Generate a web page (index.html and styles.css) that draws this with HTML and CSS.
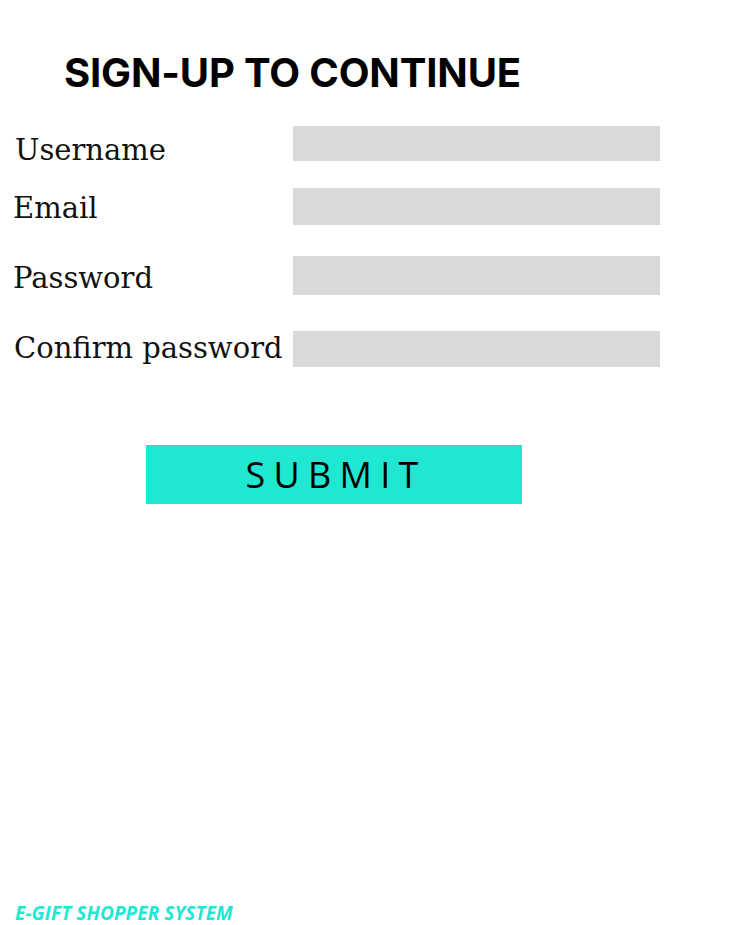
FILE: index.html
```html
<!DOCTYPE html>
<html>
<head>
<meta charset="utf-8">
<link rel="stylesheet" href="styles.css">
</head>
<body>
<div class="page">
  <h1 class="title">SIGN-UP TO CONTINUE</h1>
  <form class="form">
    <div class="row row-1"><label class="label">Username</label><div class="field"></div></div>
    <div class="row row-2"><label class="label">Email</label><div class="field"></div></div>
    <div class="row row-3"><label class="label">Password</label><div class="field"></div></div>
    <div class="row row-4"><label class="label">Confirm password</label><div class="field"></div></div>
    <div class="actions"><button type="button" class="submit">SUBMIT</button></div>
  </form>
  <footer class="footer">E-GIFT SHOPPER SYSTEM</footer>
</div>
</body>
</html>
```
FILE: styles.css
```css
* { box-sizing: border-box; }
html, body { margin: 0; padding: 0; background: #fff; }
.page {
  min-height: 925px;
  display: flex;
  flex-direction: column;
}
.title {
  margin: 49px 0 0 64px;
  font-family: Inter, "Liberation Sans", sans-serif;
  font-weight: 700;
  font-size: 40px;
  line-height: 48px;
  letter-spacing: -0.004em;
  color: #000;
}
.form { display: flex; flex-direction: column; margin: 0; }
.row { display: flex; align-items: flex-start; }
.label {
  width: 293px;
  padding-left: 14px;
  font-family: "DejaVu Serif", "Liberation Serif", serif;
  font-size: 29px;
  line-height: 32px;
  color: #111;
  white-space: nowrap;
}
.field { width: 367px; background: #d9d9d9; }
.row-1 { margin-top: 29px; }
.row-1 .label { margin-top: 8px; padding-left: 15px; }
.row-1 .field { height: 35px; }
.row-2 { margin-top: 22px; }
.row-2 .label { margin-top: 4px; padding-left: 13px; }
.row-2 .field { height: 37px; }
.row-3 { margin-top: 31px; }
.row-3 .label { margin-top: 6px; padding-left: 13px; }
.row-3 .field { height: 39px; }
.row-4 { margin-top: 36px; }
.row-4 .label { margin-top: 1px; }
.row-4 .field { height: 36px; }
.actions { margin-top: 78px; padding-left: 146px; }
.submit {
  width: 376px;
  height: 59px;
  border: 0;
  padding: 0 0 0 4px;
  background: #1fe7d2;
  font-family: "Open Sans", sans-serif;
  font-size: 36px;
  letter-spacing: 0.23em;
  color: #000;
  display: flex;
  align-items: center;
  justify-content: center;
}
.footer {
  margin-top: auto;
  padding: 0 0 0 15px;
  font-family: "Open Sans", sans-serif;
  font-style: italic;
  font-weight: 700;
  font-size: 19px;
  line-height: 24px;
  color: #1fe7d2;
  letter-spacing: 0.005em;
}
```
